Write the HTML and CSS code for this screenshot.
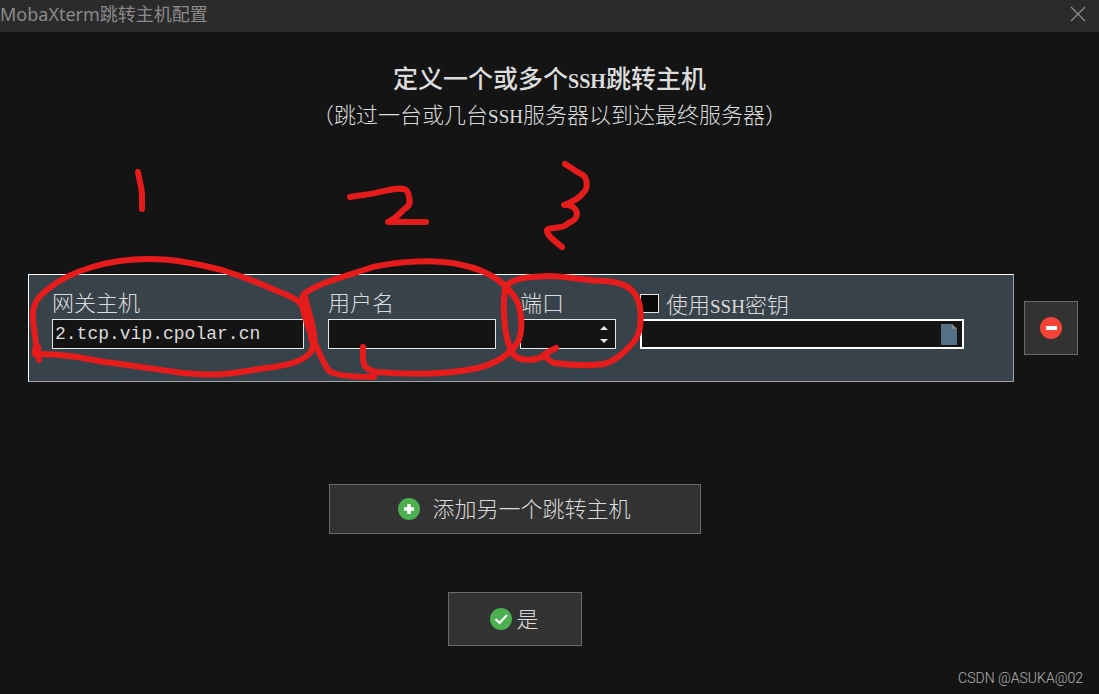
FILE: index.html
```html
<!DOCTYPE html>
<html lang="zh-CN">
<head>
  <meta charset="UTF-8" />
  <meta name="viewport" content="width=device-width, initial-scale=1.0" />
  <title>MobaXterm跳转主机配置</title>
  <link rel="stylesheet" href="styles.css">
</head>
<body>
  <header class="titlebar">
    <span class="titlebar-text">MobaXterm跳转主机配置</span>
    <button class="close" type="button" aria-label="关闭">
      <svg width="16" height="16" viewBox="0 0 16 16"><path d="M1 1L15 15M15 1L1 15" stroke="#8c8c8c" stroke-width="1.3" fill="none"/></svg>
    </button>
  </header>

  <main>
    <div class="intro">
      <h1>定义一个或多个<span class="latin">SSH</span>跳转主机</h1>
      <p>（跳过一台或几台<span class="latin">SSH</span>服务器以到达最终服务器）</p>
    </div>

    <form class="hosts">
      <div class="host-row">
        <div class="panel">
          <div class="field">
            <label for="host">网关主机</label>
            <input class="box" id="host" type="text" value="2.tcp.vip.cpolar.cn">
          </div>
          <div class="field">
            <label for="user">用户名</label>
            <input class="box" id="user" type="text">
          </div>
          <div class="field">
            <label for="port">端口</label>
            <div class="box spinner">
              <input id="port" type="text" inputmode="numeric">
              <div class="arrows">
                <button type="button" aria-label="增加"><svg width="8" height="4" viewBox="0 0 8 4"><path d="M0 4L4 0L8 4Z" fill="#e6e6e6"/></svg></button>
                <button type="button" aria-label="减少"><svg width="8" height="4" viewBox="0 0 8 4"><path d="M0 0L4 4L8 0Z" fill="#e6e6e6"/></svg></button>
              </div>
            </div>
          </div>
          <div class="field">
            <div class="check">
              <input id="use-key" type="checkbox">
              <label for="use-key">使用<span class="latin">SSH</span>密钥</label>
            </div>
            <div class="box keyfile">
              <input type="text" aria-label="密钥文件">
              <button type="button" aria-label="浏览">
                <svg width="16" height="21" viewBox="0 0 16 21"><path d="M0 0H11L16 5V21H0Z" fill="#557087"/><path d="M11 0L16 5H11Z" fill="#85898a"/></svg>
              </button>
            </div>
          </div>
        </div>
        <button class="btn remove" type="button" aria-label="删除">
          <svg width="22" height="22" viewBox="0 0 22 22"><circle cx="11" cy="11" r="11" fill="#f44336"/><rect x="6" y="9" width="11" height="4" fill="#fff"/></svg>
        </button>
      </div>

      <div class="actions">
        <button class="btn add" type="button">
          <svg width="22" height="22" viewBox="0 0 22 22"><circle cx="11" cy="11" r="11" fill="#4caf50"/><path d="M11 6V16M6 11H16" stroke="#fff" stroke-width="3.4"/></svg>
          <span>添加另一个跳转主机</span>
        </button>
        <button class="btn ok" type="button">
          <svg width="22" height="22" viewBox="0 0 22 22"><circle cx="11" cy="11" r="11" fill="#4caf50"/><path d="M5.5 11L9.5 15L17 7" stroke="#fff" stroke-width="2.2" fill="none"/></svg>
          <span>是</span>
        </button>
      </div>
    </form>
  </main>

  <footer>CSDN @ASUKA@02</footer>

  <!-- hand-drawn marks over the form -->
  <svg class="marks" viewBox="0 0 1099 694" aria-hidden="true">
    <path d="M138 172C139 180 142 187 142 196V209"/>
    <path d="M350 197C358 195 370 195 379 192C390 190 406 185 408 193C410 199 411 204 407 207C400 212 399 217 388 222H426"/>
    <path d="M565 164C571 167 574 171 581 174C588 177 588 188 584 192C579 199 572 202 564 205C574 204 580 212 575 219C572 222 569 222 566 225C561 229 548 227 547 230C546 235 556 242 562 247"/>
    <path d="M39 360C36 345 34 330 33 320C32 304 37 298 48 289C70 271 108 259 149 259C175 259 197 264 222 270C244 277 260 283 277 291C293 297 302 301 305 312C310 328 318 346 309 354C299 364 281 366 259 369C241 372 220 377 183 373C160 370 138 366 104 362C83 358 63 354 38 354"/>
    <path d="M36 353L37 348" stroke-width="9"/>
    <path d="M374 377C354 377 337 376 329 371C321 360 316 345 309 329C304 315 300 302 304 294C315 284 347 276 373 267C400 261 436 259 462 265C492 271 510 287 518 303C522 317 523 328 519 340C510 356 494 364 478 368C446 375 414 375 376 372C361 368 363 363 363 347"/>
    <path d="M556 348C550 351 545 353 542 357C534 361 519 361 514 355C505 344 502 312 505 289C509 277 531 277 549 276C568 276 585 281 604 281C626 282 637 290 640 307C642 326 640 336 630 346C620 357 612 362 604 364C588 366 569 365 554 363C550 362 548 358 544 356"/>
    <path d="M304 298C306 312 312 322 313 340" stroke-width="9"/>
  </svg>
</body>
</html>
```

FILE: styles.css
```css
* {
  box-sizing: border-box;
}

body {
  margin: 0;
  min-height: 100vh;
  display: flex;
  flex-direction: column;
  position: relative;
  background: #141414;
  color: #dcdcdc;
  font-family: "Noto Sans CJK SC", sans-serif;
  font-weight: 300;
  font-size: 22px;
  line-height: 28px;
}

input, button {
  font: inherit;
  color: inherit;
  margin: 0;
  padding: 0;
  border: none;
  border-radius: 0;
  background: none;
}

input:focus {
  outline: none;
}

button {
  cursor: pointer;
}

svg {
  display: block;
}

/* title bar */
.titlebar {
  display: flex;
  justify-content: space-between;
  height: 32px;
  padding-right: 11px;
  background: #2b2b2b;
  color: #8a8a8a;
  font-family: "Noto Sans", "Noto Sans CJK SC", sans-serif;
  font-weight: 400;
  font-size: 18px;
}

.close {
  height: 28px;
  width: 18px;
}

/* heading */
.intro {
  padding-top: 29px;
  text-align: center;
}

.intro h1 {
  margin: 0;
  font-size: 25px;
  font-weight: 500;
  line-height: 32px;
}

.intro p {
  margin: 6px 0 0;
}

.latin {
  font-family: "Liberation Serif", serif;
  font-size: 19px;
  line-height: 1;
}

h1 .latin {
  font-size: 20px;
  font-weight: 700;
}

/* host row */
.hosts {
  padding: 147px 21px 0 28px;
}

.host-row {
  display: flex;
  align-items: center;
  gap: 10px;
}

.panel {
  flex: 1;
  display: grid;
  grid-template-columns: 252fr 168fr 96fr 324fr;
  gap: 24px;
  padding: 16px 49px 32px 23px;
  background: #37424a;
  border: 1px solid #a0a4a6;
  border-top-color: #fff;
  border-left-color: #fff;
}

.field {
  display: flex;
  flex-direction: column;
  min-width: 0;
}

.field > label {
  line-height: 20px;
  margin-bottom: 8px;
}

.box {
  width: 100%;
  height: 30px;
  border: 1px solid #e6e6e6;
  background: #141414;
}

input.box {
  padding-left: 2px;
  font-family: "Liberation Mono", monospace;
  font-size: 18px;
}

.spinner, .keyfile {
  display: flex;
  align-items: center;
}

.spinner input, .keyfile input {
  flex: 1;
  min-width: 0;
  font-size: 18px;
}

.arrows {
  display: flex;
  flex-direction: column;
  gap: 9px;
  padding-right: 7px;
}

.keyfile {
  border: 2px solid #fff;
  padding-right: 5px;
}

.check {
  display: flex;
  align-items: center;
  gap: 7px;
  height: 28px;
  padding-bottom: 4px;
}

.check input {
  appearance: none;
  width: 19px;
  height: 19px;
  background: #0a0a0a;
  border: 1px solid #e6e6e6;
}

.check input:checked {
  background: #4caf50;
}

/* buttons */
.btn {
  display: flex;
  align-items: center;
  justify-content: center;
  background: #323232;
  border: 1px solid #6a6a6a;
}

.btn:hover {
  background: #3c3c3c;
}

.btn span {
  padding-bottom: 4px;
}

.remove {
  width: 54px;
  height: 54px;
}

.actions {
  display: flex;
  flex-direction: column;
  align-items: center;
  gap: 58px;
  padding: 102px 77px 0 0;
}

.add {
  width: 372px;
  height: 50px;
  gap: 12px;
}

.ok {
  width: 134px;
  height: 54px;
  gap: 4px;
}

footer {
  margin-top: auto;
  padding: 0 16px 6px;
  text-align: right;
  color: #b4b4b4;
  font-family: Roboto, sans-serif;
  font-size: 14px;
  line-height: 20px;
}

.marks {
  position: absolute;
  top: 0;
  left: 0;
  width: 100%;
  pointer-events: none;
  fill: none;
  stroke: #e61c1c;
  stroke-width: 6;
  stroke-linecap: round;
  stroke-linejoin: round;
}
```
